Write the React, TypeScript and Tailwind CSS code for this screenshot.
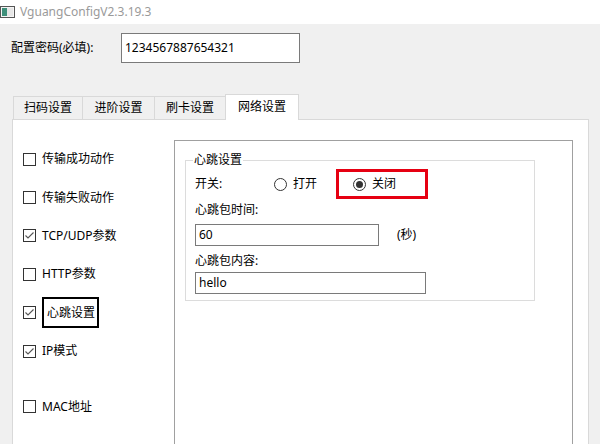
import React from "react";

const font = { fontFamily: '"Noto Sans", "Noto Sans CJK SC", sans-serif' };

const Check = ({ checked, label, boxed }: { checked?: boolean; label: string; boxed?: boolean }) => (
    <div className="flex items-center h-[38.4px]">
        <span className="w-[13px] h-[13px] border border-[#333333] bg-white flex items-center justify-center">
            {checked && (
                <svg width="11" height="11" viewBox="0 0 11 11">
                    <path d="M1.5 5.5 L4 8 L9.5 2.5" fill="none" stroke="#555" strokeWidth="1.1" />
                </svg>
            )}
        </span>
        {boxed ? (
            <span className="ml-[6px] h-[31px] w-[57px] border-2 border-black flex items-center pl-[3px]">{label}</span>
        ) : (
            <span className="ml-[6px]">{label}</span>
        )}
    </div>
);

const Radio = ({ on, label }: { on?: boolean; label: string }) => (
    <div className="flex items-center">
        <span className="w-[13px] h-[13px] rounded-full border border-[#333333] bg-white flex items-center justify-center">
            {on && <span className="w-[7px] h-[7px] rounded-full bg-[#333333]" />}
        </span>
        <span className="ml-[6px]">{label}</span>
    </div>
);

const tabs = [
    { name: "扫码设置", w: "w-[69px]" },
    { name: "进阶设置", w: "w-[72px]" },
    { name: "刷卡设置", w: "w-[71px]" },
];

export default function App() {
    return (
        <div className="w-[600px] h-[444px] bg-[#f0f0f0] overflow-hidden text-[12px] text-black" style={font}>
            {/* title bar */}
            <div className="h-[24px] bg-white flex items-center">
                <svg width="15" height="12" viewBox="0 0 15 12" className="ml-0">
                    <rect x="0.5" y="0.5" width="14" height="11" fill="#f4f4f4" stroke="#555" />
                    <rect x="2" y="2" width="5" height="8" fill="#3d8f7a" />
                    <rect x="7" y="2" width="6" height="8" fill="#e6e6e6" />
                </svg>
                <span className="ml-[5px] text-[#9a9a9a]">VguangConfigV2.3.19.3</span>
            </div>

            {/* password row */}
            <div className="mt-[9px] flex items-center h-[30px]">
                <span className="ml-[11px] w-[110px]">配置密码(必填):</span>
                <div className="w-[179px] h-[30px] bg-white border border-[#7a7a7a] flex items-center pl-[3px]">
                    1234567887654321
                </div>
            </div>

            {/* tabs */}
            <div className="mt-[31px] px-[12px] mr-[-1px]">
                <div className="flex items-end h-[25px] pl-[1px]">
                    {tabs.map((t) => (
                        <div
                            key={t.name}
                            className={`${t.w} h-[23px] border-t border-l border-[#d9d9d9] bg-[#f0f0f0] flex items-center justify-center`}
                        >
                            {t.name}
                        </div>
                    ))}
                    <div className="w-[74px] h-[26px] -mb-px relative z-10 border-t border-l border-r border-[#d9d9d9] bg-white flex items-center justify-center pb-[2px]">
                        网络设置
                    </div>
                </div>

                <div className="w-[577px] h-[330px] border border-[#d9d9d9] bg-white flex">
                    <div className="w-[161px] pt-[20px] pl-[10px]">
                        <Check label="传输成功动作" />
                        <Check label="传输失败动作" />
                        <Check checked label="TCP/UDP参数" />
                        <Check label="HTTP参数" />
                        <Check checked boxed label="心跳设置" />
                        <Check checked label="IP模式" />
                        <div className="mt-[17px]">
                            <Check label="MAC地址" />
                        </div>
                    </div>

                    <div className="mt-[20px] w-[399px] h-[320px] border border-[#a0a0a0]">
                        <fieldset className="ml-[10px] mt-[11px] w-[350px] border border-[#dcdcdc] pl-[9px] pb-[6px]">
                            <legend className="ml-[-2px] px-[1px] leading-[16px]">心跳设置</legend>
                            <div className="mt-[1px] flex items-center h-[30px]">
                                <span className="w-[79px]">开关:</span>
                                <div className="w-[62px]">
                                    <Radio label="打开" />
                                </div>
                                <div className="w-[92px] h-[30px] border-[3px] border-[#e60012] flex items-center pl-[14px]">
                                    <Radio on label="关闭" />
                                </div>
                            </div>
                            <div className="h-[22px] flex items-center">心跳包时间:</div>
                            <div className="mt-[3px] flex items-center">
                                <div className="w-[184px] h-[22px] border border-[#7a7a7a] flex items-center pl-[3px]">60</div>
                                <span className="ml-[18px]">(秒)</span>
                            </div>
                            <div className="mt-[4px] h-[22px] flex items-center">心跳包内容:</div>
                            <div className="w-[231px] h-[22px] border border-[#7a7a7a] flex items-center pl-[3px]">hello</div>
                        </fieldset>
                    </div>
                </div>
            </div>
        </div>
    );
}
